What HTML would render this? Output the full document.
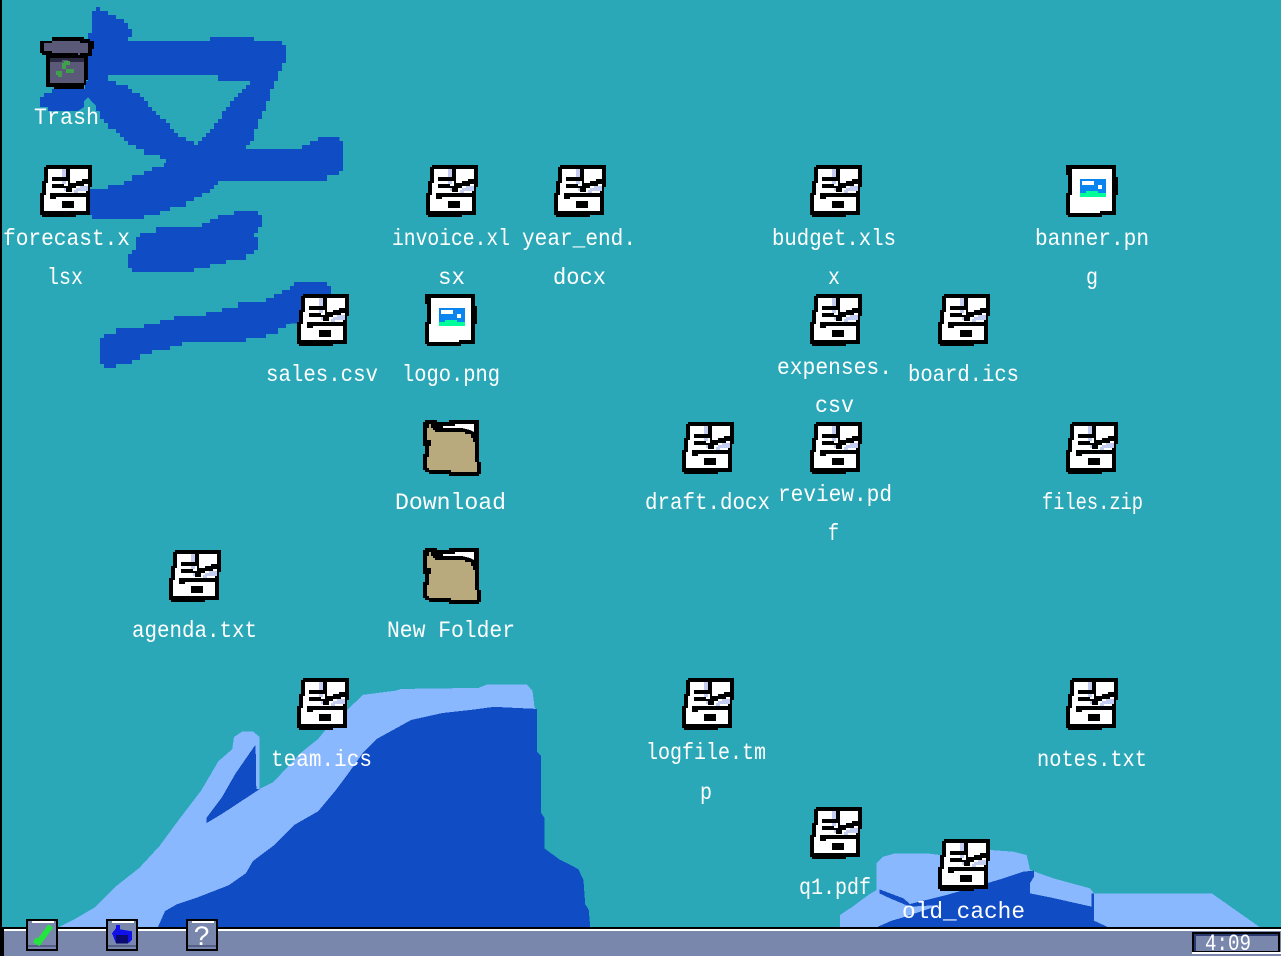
<!DOCTYPE html>
<html lang="en">
<head>
<meta charset="utf-8">
<title>Desktop</title>
<style>
html,body{margin:0;padding:0;width:1281px;height:956px;overflow:hidden;background:#2aa8b8}
svg{display:block}
.t{font-family:"Liberation Mono",monospace;font-size:23px;fill:#fff}
</style>
</head>
<body>
<svg width="1281" height="956" viewBox="0 0 1281 956" shape-rendering="crispEdges" xmlns="http://www.w3.org/2000/svg">
<defs>
<g id="doc">
<polygon fill="#000" points="6,0 52,0 52,22 50,22 50,50 36,50 36,52 2,52 2,50 0,50 0,28 2,28 2,16 4,16 4,2 6,2"/>
<polygon fill="#fff" points="8,4 48,4 48,22 46,22 46,46 4,46 4,30 6,30 6,18 8,18"/>
<rect x="22" y="4" width="4" height="8" fill="#c4ccf0"/>
<rect x="26" y="4" width="4" height="12" fill="#000"/>
<rect x="12" y="12" width="14" height="4" fill="#000"/>
<rect x="12" y="19" width="12" height="4" fill="#000"/>
<rect x="22" y="16" width="4" height="3" fill="#c4ccf0"/>
<polygon fill="#000" points="30,18 36,18 36,16 42,16 42,14 48,14 48,19 44,19 44,21 36,21 36,23 32,23 32,27 26,27 26,23 24,23 24,21 28,21 28,16 30,16"/>
<polygon fill="#c4ccf0" points="36,23 40,23 40,21 48,21 48,26 38,26 38,28 34,28 34,25 36,25"/>
<rect x="24" y="23" width="2" height="3" fill="#c4ccf0"/>
<polygon fill="#000" points="10,28 46,28 46,32 16,32 16,34 10,34"/>
<rect x="22" y="36" width="12" height="7" fill="#000"/>
</g>
<g id="img">
<polygon fill="#000" points="0,0 50,0 50,12 52,12 52,30 50,30 50,50 36,50 36,52 2,52 2,50 0,50 0,28 2,28 2,10 0,10"/>
<polygon fill="#fff" points="6,4 46,4 46,46 34,46 34,48 4,48 4,30 6,30"/>
<rect x="14" y="14" width="26" height="14" fill="#0a85f0"/>
<rect x="14" y="28" width="26" height="4" fill="#00ff99"/>
<rect x="20" y="26" width="12" height="2" fill="#00ff99"/>
<rect x="16" y="16" width="12" height="4" fill="#fff"/>
<rect x="32" y="20" width="4" height="4" fill="#fff"/>
</g>
<g id="folder">
<polygon fill="#000" points="75,30 111,30 111,36 147,36 147,30 237,30 237,156 243,156 243,192 237,192 237,198 147,198 147,192 87,192 87,186 75,186 75,180 69,180 69,132 75,132 75,108 69,108 69,36 75,36"/>
<polygon fill="#fff" points="129,48 165,48 165,42 222,42 222,66 210,60 186,54 129,54"/>
<polygon fill="#b9aa7e" points="87,42 93,42 93,54 99,54 99,60 105,60 105,66 195,66 195,72 213,72 213,84 219,84 219,96 225,96 225,156 231,156 231,186 153,186 153,180 87,180 87,174 81,174 81,141 87,141 87,108 93,108 93,90 81,90 81,54 87,54"/>
</g>
<g id="btn">
<rect width="32" height="32" fill="#000"/>
<rect x="2" y="2" width="28" height="28" fill="#7a87ad"/>
<rect x="6" y="2" width="22" height="2" fill="#fff"/>
<rect x="2" y="26" width="28" height="2" fill="#566086"/>
</g>
</defs>

<rect width="1281" height="956" fill="#2aa8b8"/>
<rect x="0" y="0" width="2" height="956" fill="#000"/>

<!-- top-left paint -->
<g transform="translate(85,0) scale(.33333)" fill="#104cc4">
<polygon points="33,21 45,21 45,33 69,33 69,45 93,45 93,57 117,57 117,69 129,69 129,87 141,87 141,111 129,111 129,123 375,123 375,111 507,111 507,123 591,123 591,135 603,135 603,189 591,189 591,213 579,213 579,243 567,243 567,267 555,267 555,303 543,303 543,333 531,333 531,357 519,357 519,387 507,387 507,423 495,423 495,435 483,435 483,447 651,447 651,435 675,435 675,423 699,423 699,411 763,411 763,423 774,423 774,513 762,513 762,525 726,525 726,543 399,543 399,555 387,555 387,567 375,567 375,579 351,579 351,591 327,591 327,603 303,603 303,621 255,621 255,633 225,633 225,645 177,645 177,657 21,657 21,645 15,645 15,567 69,567 69,555 117,555 117,543 141,543 141,525 177,525 177,513 201,513 201,501 237,501 237,489 243,489 243,477 225,477 225,465 177,465 177,447 153,447 153,435 129,435 129,423 117,423 117,411 105,411 105,399 93,399 93,387 69,387 69,369 57,369 57,357 45,357 45,333 33,333 33,303 21,303 21,291 0,291 0,243 9,243 9,99 21,99 21,33 33,33"/>
<polygon fill="#2aa8b8" points="69,225 399,225 399,243 495,243 495,255 483,255 483,267 471,267 471,279 459,279 459,291 447,291 447,303 435,303 435,321 423,321 423,333 411,333 411,357 399,357 399,369 387,369 387,387 375,387 375,399 363,399 363,411 351,411 351,423 339,423 339,435 327,435 327,423 303,423 303,411 279,411 279,399 267,399 267,387 255,387 255,369 243,369 243,357 225,357 225,345 213,345 213,333 201,333 201,321 189,321 189,303 177,303 177,291 165,291 165,279 141,279 141,267 129,267 129,255 93,255 93,243 69,243"/>
<polygon points="447,633 519,633 519,645 531,645 531,681 519,681 519,699 507,699 507,711 519,711 519,750 507,750 507,762 483,762 483,780 423,780 423,792 375,792 375,804 327,804 327,816 141,816 141,804 129,804 129,762 141,762 141,750 153,750 153,711 165,711 165,699 213,699 213,681 351,681 351,669 375,669 375,657 399,657 399,645 447,645"/>
<polygon points="627,846 726,846 726,858 738,858 738,882 660,882 640,970 603,972 603,984 579,984 579,1002 543,1002 543,1014 483,1014 483,1026 291,1026 291,1038 255,1038 255,1050 201,1050 201,1062 165,1062 165,1080 141,1080 141,1092 93,1092 93,1104 57,1104 57,1092 45,1092 45,1014 57,1014 57,1002 93,1002 93,984 177,984 177,972 225,972 225,960 267,960 267,948 363,948 363,936 411,936 411,924 459,924 459,906 543,906 543,894 567,894 567,882 591,882 591,870 615,870 615,858 627,858"/>
</g>
<polygon fill="#104cc4" points="52,89 100,89 100,112 96,106 92,102 88,97 84,101 84,107 78,111 48,111 48,107 40,107 40,97 44,97 44,93 52,93"/>

<!-- bottom-left mountain -->
<g transform="translate(60,670) scale(.34439)">
<polygon fill="#8ab8ff" points="0,745 40,725 100,690 160,630 230,575 290,510 345,435 410,350 460,265 500,230 505,195 530,178 560,178 580,195 580,345 620,325 700,240 750,200 790,150 835,115 880,72 975,60 990,55 1215,52 1240,42 1355,42 1372,60 1378,110 1385,115 1385,771 0,771"/>
<polygon fill="#104cc4" points="270,771 285,745 305,700 340,680 400,660 490,625 540,590 560,555 620,510 680,450 750,410 800,350 830,310 880,240 920,200 1020,145 1110,125 1200,115 1260,107 1385,113 1385,237 1397,250 1397,415 1407,430 1407,518 1450,550 1505,578 1520,610 1525,680 1535,695 1542,771"/>
<polygon fill="#104cc4" points="562,225 568,218 570,345 581,345 540,372 470,418 425,445 425,430 470,370 510,300"/>
</g>

<!-- bottom-right paint -->
<g transform="translate(840,830) scale(.33333)">
<polygon fill="#8ab8ff" points="0,255 35,232 85,195 110,180 110,100 130,80 165,70 260,70 300,75 450,60 520,65 560,75 570,120 640,145 750,175 762,190 1115,190 1260,292 0,292"/>
<polygon fill="#104cc4" points="118,178 150,190 190,205 210,222 320,195 440,160 490,145 550,125 582,122 582,140 570,160 570,190 630,202 755,230 755,190 762,190 762,272 805,292 110,292 155,272 190,262 300,225 210,230 150,205 118,190"/>
</g>

<!-- trash -->
<g>
<polygon fill="#000" points="52,37 84,37 84,39 90,39 90,41 94,41 94,49 92,49 92,56 88,56 88,80 86,80 86,85 84,85 84,89 54,89 54,87 46,87 46,55 42,55 42,53 40,53 40,41 52,41"/>
<polygon fill="#5a5a78" points="52,41 80,41 80,43 88,43 88,53 80,53 80,55 78,55 78,53 52,53 52,51 44,51 44,43 52,43"/>
<rect x="50" y="58" width="34" height="4" fill="#2a2a45"/>
<rect x="50" y="62" width="34" height="21" fill="#5a5a78"/>
<rect x="62" y="60" width="6" height="3" fill="#5a5a78"/>
<polygon fill="#3ea04a" points="64,61 70,61 70,65 66,65 66,69 62,69 62,63 64,63"/>
<rect x="66" y="69" width="8" height="4" fill="#3ea04a"/>
<polygon fill="#3ea04a" points="56,71 62,71 62,77 58,77 58,75 56,75"/>
</g>

<!-- icons -->
<use href="#doc" x="40" y="165"/>
<use href="#doc" x="426" y="165"/>
<use href="#doc" x="554" y="165"/>
<use href="#doc" x="810" y="165"/>
<use href="#img" x="1066" y="165"/>
<use href="#doc" x="297" y="294"/>
<use href="#img" x="425" y="294"/>
<use href="#doc" x="810" y="294"/>
<use href="#doc" x="938" y="294"/>
<use href="#doc" x="682" y="422"/>
<use href="#doc" x="810" y="422"/>
<use href="#doc" x="1066" y="422"/>
<use href="#doc" x="169" y="550"/>
<use href="#doc" x="297" y="678"/>
<use href="#doc" x="682" y="678"/>
<use href="#doc" x="1066" y="678"/>
<use href="#doc" x="810" y="807"/>
<use href="#doc" x="938" y="839"/>
<g transform="translate(400,410) scale(.33333)"><use href="#folder"/></g>
<g transform="translate(400,538) scale(.33333)"><use href="#folder"/></g>

<!-- labels -->
<g shape-rendering="auto">
<text class="t" x="34" y="124" textLength="65" lengthAdjust="spacingAndGlyphs">Trash</text>
<text class="t" x="3" y="245" textLength="127" lengthAdjust="spacingAndGlyphs">forecast.x</text>
<text class="t" x="47" y="284" textLength="36" lengthAdjust="spacingAndGlyphs">lsx</text>
<text class="t" x="392" y="245" textLength="118" lengthAdjust="spacingAndGlyphs">invoice.xl</text>
<text class="t" x="438" y="284" textLength="27" lengthAdjust="spacingAndGlyphs">sx</text>
<text class="t" x="522" y="245" textLength="114" lengthAdjust="spacingAndGlyphs">year_end.</text>
<text class="t" x="553" y="284" textLength="53" lengthAdjust="spacingAndGlyphs">docx</text>
<text class="t" x="772" y="245" textLength="124" lengthAdjust="spacingAndGlyphs">budget.xls</text>
<text class="t" x="828" y="284" textLength="12" lengthAdjust="spacingAndGlyphs">x</text>
<text class="t" x="1035" y="245" textLength="114" lengthAdjust="spacingAndGlyphs">banner.pn</text>
<text class="t" x="1086" y="284" textLength="12" lengthAdjust="spacingAndGlyphs">g</text>
<text class="t" x="266" y="381" textLength="112" lengthAdjust="spacingAndGlyphs">sales.csv</text>
<text class="t" x="402" y="381" textLength="98" lengthAdjust="spacingAndGlyphs">logo.png</text>
<text class="t" x="777" y="374" textLength="115" lengthAdjust="spacingAndGlyphs">expenses.</text>
<text class="t" x="815" y="412" textLength="39" lengthAdjust="spacingAndGlyphs">csv</text>
<text class="t" x="908" y="381" textLength="111" lengthAdjust="spacingAndGlyphs">board.ics</text>
<text class="t" x="645" y="509" textLength="125" lengthAdjust="spacingAndGlyphs">draft.docx</text>
<text class="t" x="778" y="501" textLength="114" lengthAdjust="spacingAndGlyphs">review.pd</text>
<text class="t" x="828" y="540" textLength="11" lengthAdjust="spacingAndGlyphs">f</text>
<text class="t" x="1042" y="509" textLength="101" lengthAdjust="spacingAndGlyphs">files.zip</text>
<text class="t" x="395" y="509" textLength="111" lengthAdjust="spacingAndGlyphs">Download</text>
<text class="t" x="132" y="637" textLength="125" lengthAdjust="spacingAndGlyphs">agenda.txt</text>
<text class="t" x="387" y="637" textLength="128" lengthAdjust="spacingAndGlyphs">New Folder</text>
<text class="t" x="271" y="766" textLength="101" lengthAdjust="spacingAndGlyphs">team.ics</text>
<text class="t" x="646" y="759" textLength="120" lengthAdjust="spacingAndGlyphs">logfile.tm</text>
<text class="t" x="700" y="799" textLength="12" lengthAdjust="spacingAndGlyphs">p</text>
<text class="t" x="1037" y="766" textLength="110" lengthAdjust="spacingAndGlyphs">notes.txt</text>
<text class="t" x="799" y="894" textLength="72" lengthAdjust="spacingAndGlyphs">q1.pdf</text>
<text class="t" x="902" y="918" textLength="123" lengthAdjust="spacingAndGlyphs">old_cache</text>
</g>

<!-- taskbar -->
<rect x="0" y="927" width="1281" height="2" fill="#000"/>
<rect x="0" y="929" width="1281" height="2" fill="#fff"/>
<rect x="0" y="931" width="1281" height="25" fill="#7a87ad"/>
<rect x="0" y="929" width="4" height="27" fill="#000"/>

<use href="#btn" x="26" y="919"/>
<use href="#btn" x="106" y="919"/>
<use href="#btn" x="186" y="919"/>

<g transform="translate(0,910) scale(.33333)">
<polyline fill="none" stroke="#22e63c" stroke-width="17" points="103,90 116,97 152,48"/>
<polygon fill="#1010e8" points="348,45 360,45 360,58 396,64 396,90 384,100 348,100 340,80 336,70 348,55"/>
<rect x="348" y="75" width="36" height="25" fill="#0a0a70"/>
</g>
<text x="202" y="945" text-anchor="middle" font-family="Liberation Mono, monospace" font-size="28" fill="#fff" shape-rendering="auto">?</text>

<!-- clock -->
<rect x="1192" y="932" width="88" height="21" fill="#000"/>
<rect x="1194" y="934" width="84" height="17" fill="#2a3a70"/>
<rect x="1196" y="936" width="82" height="15" fill="#7a87ad"/>
<rect x="1192" y="952" width="89" height="2" fill="#fff"/>
<text class="t" x="1205" y="950" textLength="46" lengthAdjust="spacingAndGlyphs" shape-rendering="auto">4:09</text>
</svg>
</body>
</html>
